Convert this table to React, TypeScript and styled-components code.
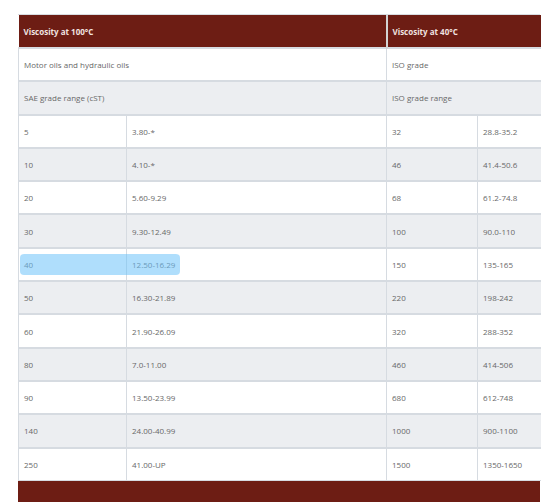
import React from "react";
import styled, { createGlobalStyle } from "styled-components";

const Global = createGlobalStyle`
  html, body { margin: 0; padding: 0; background: #ffffff; overflow: hidden; }
  body { font-family: "Open Sans", "Noto Sans", sans-serif; }
`;

const Page = styled.div`
  padding: 14px 20px 0 18px;
  width: 522px;
`;

const Wrap = styled.div`
  position: relative;
  border-top: 1px solid #d9dde2;
`;

const Table = styled.table`
  width: 522px;
  border-collapse: collapse;
  table-layout: fixed;
  font-size: 8px;
  color: #686868;
`;

const HeadCell = styled.th<{ $divider?: boolean }>`
  background: #6d1d14;
  color: #f1e3e0;
  font-weight: 700;
  text-align: left;
  padding: 0 5px;
  height: 32px;
  border-left: ${(p) => (p.$divider ? "2px solid #d3d3d3" : "none")};
`;

const Row = styled.tr<{ $alt?: boolean }>`
  background: ${(p) => (p.$alt ? "#eceef1" : "#ffffff")};
`;

const Cell = styled.td`
  height: 33.3px;
  padding: 0 5px;
  box-sizing: border-box;
  border: 1px solid #d6dbe1;
  border-top: 2px solid #d6dbe1;
  border-right: none;
  white-space: nowrap;
  overflow: hidden;
`;

const Highlight = styled.div`
  position: absolute;
  left: 2px;
  width: 160px;
  height: 21px;
  border-radius: 4px;
  background: rgba(110, 195, 250, 0.55);
  pointer-events: none;
`;

const FooterBar = styled.div`
  height: 30px;
  background: #6d1d14;
`;

const rows: [string, string, string, string][] = [
  ["5", "3.80-*", "32", "28.8-35.2"],
  ["10", "4.10-*", "46", "41.4-50.6"],
  ["20", "5.60-9.29", "68", "61.2-74.8"],
  ["30", "9.30-12.49", "100", "90.0-110"],
  ["40", "12.50-16.29", "150", "135-165"],
  ["50", "16.30-21.89", "220", "198-242"],
  ["60", "21.90-26.09", "320", "288-352"],
  ["80", "7.0-11.00", "460", "414-506"],
  ["90", "13.50-23.99", "680", "612-748"],
  ["140", "24.00-40.99", "1000", "900-1100"],
  ["250", "41.00-UP", "1500", "1350-1650"],
];

export default function App() {
  return (
    <Page>
      <Global />
      <Wrap>
        <Table>
          <colgroup>
            <col style={{ width: 108 }} />
            <col style={{ width: 260 }} />
            <col style={{ width: 91 }} />
            <col style={{ width: 63 }} />
          </colgroup>
          <thead>
            <tr>
              <HeadCell colSpan={2}>Viscosity at 100°C</HeadCell>
              <HeadCell colSpan={2} $divider>
                Viscosity at 40°C
              </HeadCell>
            </tr>
          </thead>
          <tbody>
            <Row>
              <Cell colSpan={2}>Motor oils and hydraulic oils</Cell>
              <Cell colSpan={2}>ISO grade</Cell>
            </Row>
            <Row $alt>
              <Cell colSpan={2}>SAE grade range (cST)</Cell>
              <Cell colSpan={2}>ISO grade range</Cell>
            </Row>
            {rows.map((r, i) => (
              <Row key={r[0]} $alt={i % 2 === 1}>
                {r.map((c, j) => (
                  <Cell key={j}>{c}</Cell>
                ))}
              </Row>
            ))}
          </tbody>
        </Table>
        <Highlight style={{ top: 239 }} />
        <FooterBar />
      </Wrap>
    </Page>
  );
}
